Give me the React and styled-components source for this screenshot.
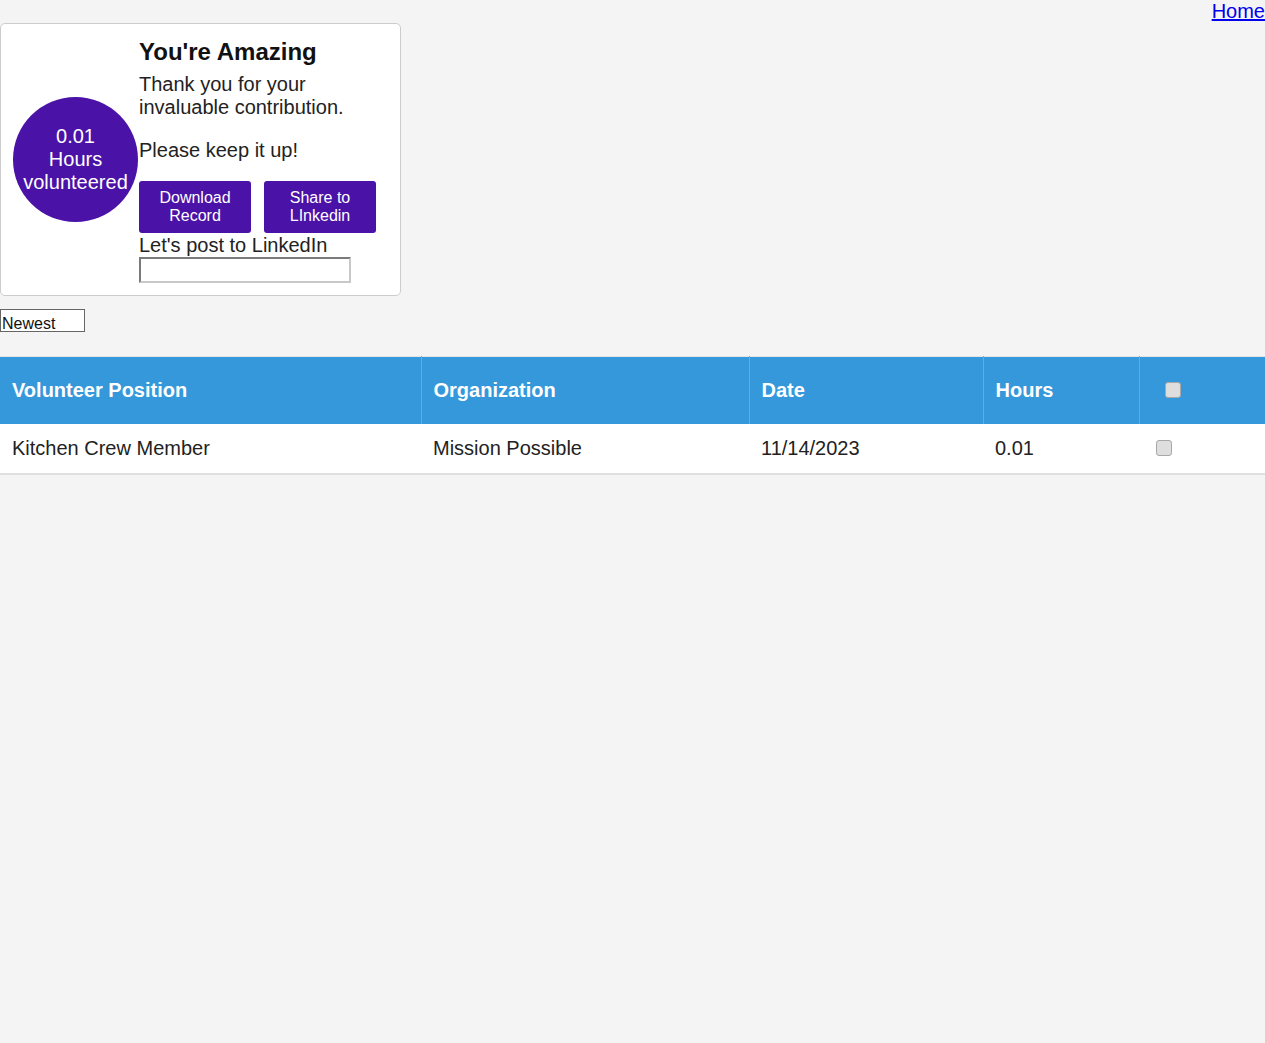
import React from "react";
import styled, { createGlobalStyle } from "styled-components";

const GlobalStyle = createGlobalStyle`
  body {
    margin: 0;
    background: #f4f4f4;
    font-family: "Liberation Sans", Arial, sans-serif;
    color: #222;
  }
`;

const purple = "#4a12a7";

const TopBar = styled.div`
  display: flex;
  justify-content: flex-end;
  height: 23px;

  a {
    color: #0000ee;
    font-size: 20px;
    line-height: 23px;
    text-decoration: underline;
  }
`;

const Card = styled.div`
  width: 375px;
  padding: 12px;
  display: flex;
  align-items: center;
  background: #fff;
  border: 1px solid #ccc;
  border-radius: 5px;
`;

const Circle = styled.div`
  flex: 0 0 125px;
  height: 125px;
  border-radius: 50%;
  background: ${purple};
  color: #fff;
  display: flex;
  align-items: center;
  justify-content: center;
  text-align: center;
  font-size: 20px;
  line-height: 23px;
`;

const Content = styled.div`
  width: 250px;
  margin-left: 1px;

  h2 {
    margin: 2px 0 7px;
    font-size: 24px;
    line-height: 28px;
    color: #111;
  }

  p {
    margin: 0 0 20px;
    font-size: 20px;
    line-height: 23px;
  }

  p + p {
    margin-bottom: 19px;
  }
`;

const Buttons = styled.div`
  display: flex;
  gap: 13px;
`;

const Button = styled.button`
  width: 112px;
  height: 52px;
  padding: 0 8px;
  border: none;
  border-radius: 3px;
  background: ${purple};
  color: #fff;
  font-family: "Liberation Sans", Arial, sans-serif;
  font-size: 16px;
  line-height: 18px;
`;

const Label = styled.div`
  font-size: 20px;
  line-height: 24px;
`;

const TextBox = styled.input`
  display: block;
  box-sizing: border-box;
  width: 212px;
  height: 26px;
  margin: 0;
  border: 2px solid;
  border-color: #7a7a7a #c8c8c8 #c8c8c8 #7a7a7a;
  background: #fff;
`;

const SortBox = styled.select`
  display: block;
  margin: 13px 0 24px;
  box-sizing: border-box;
  width: 85px;
  height: 23px;
  padding: 5px 1px 0;
  appearance: none;
  border: 1px solid #666;
  border-radius: 0;
  background: #fff;
  font-family: "Liberation Sans", Arial, sans-serif;
  font-size: 16px;
  line-height: 18px;
  color: #111;
`;

const Table = styled.table`
  width: 100%;
  border-collapse: collapse;
  table-layout: fixed;
  border-top: 1px solid #e4e4e4;
`;

const Th = styled.th`
  width: ${(p) => p.w}px;
  height: 67px;
  padding: 0 12px;
  box-sizing: border-box;
  background: #3598db;
  color: #fff;
  font-size: 20px;
  font-weight: bold;
  text-align: left;
  border-left: 1px solid #5caee3;
  &:first-child {
    border-left: none;
  }
`;

const Tr = styled.tr`
  background: #fff;
  border-bottom: 2px solid #e0e0e0;
`;

const Td = styled.td`
  height: 49px;
  padding: 0 12px;
  font-size: 20px;
  color: #222;
`;

const Check = styled.input.attrs({ type: "checkbox" })`
  appearance: none;
  display: block;
  width: 16px;
  height: 16px;
  margin: 0 0 0 ${(p) => p.offset}px;
  background: #dedede;
  border: 1px solid #a8a8a8;
  border-radius: 3px;
`;

const columns = [
  { label: "Volunteer Position", w: 421 },
  { label: "Organization", w: 328 },
  { label: "Date", w: 234 },
  { label: "Hours", w: 156 },
];

const rows = [
  { position: "Kitchen Crew Member", org: "Mission Possible", date: "11/14/2023", hours: "0.01" },
];

export default function App() {
  return (
    <>
      <GlobalStyle />
      <TopBar>
        <a href="#">Home</a>
      </TopBar>
      <Card>
        <Circle>
          0.01
          <br />
          Hours
          <br />
          volunteered
        </Circle>
        <Content>
          <h2>You're Amazing</h2>
          <p>Thank you for your invaluable contribution.</p>
          <p>Please keep it up!</p>
          <Buttons>
            <Button>Download Record</Button>
            <Button>Share to LInkedin</Button>
          </Buttons>
          <Label>Let's post to LinkedIn</Label>
          <TextBox type="text" />
        </Content>
      </Card>
      <SortBox defaultValue="newest">
        <option value="newest">Newest</option>
        <option value="oldest">Oldest</option>
      </SortBox>
      <Table>
        <thead>
          <tr>
            {columns.map((c) => (
              <Th key={c.label} w={c.w}>
                {c.label}
              </Th>
            ))}
            <Th>
              <Check offset={13} />
            </Th>
          </tr>
        </thead>
        <tbody>
          {rows.map((r) => (
            <Tr key={r.position}>
              <Td>{r.position}</Td>
              <Td>{r.org}</Td>
              <Td>{r.date}</Td>
              <Td>{r.hours}</Td>
              <Td>
                <Check offset={5} />
              </Td>
            </Tr>
          ))}
        </tbody>
      </Table>
    </>
  );
}
